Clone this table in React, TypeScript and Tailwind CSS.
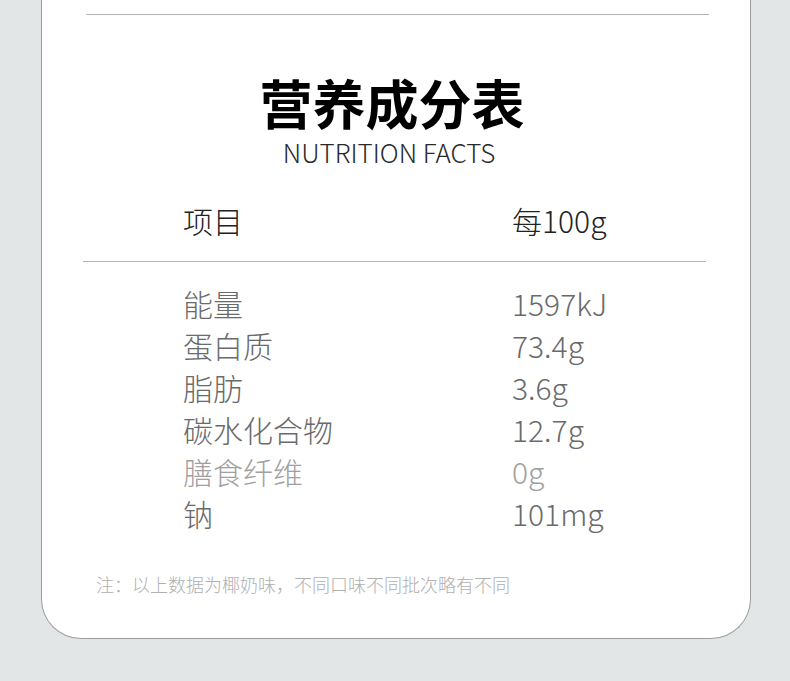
import React from "react";

const rows: { name: string; value: string; light?: boolean }[] = [
  { name: "能量", value: "1597kJ" },
  { name: "蛋白质", value: "73.4g" },
  { name: "脂肪", value: "3.6g" },
  { name: "碳水化合物", value: "12.7g" },
  { name: "膳食纤维", value: "0g", light: true },
  { name: "钠", value: "101mg" },
];

const cjk = { fontFamily: '"Noto Sans CJK SC", "Noto Sans", sans-serif' };

export default function App() {
  return (
    <div className="w-[790px] h-[681px] bg-[#e3e6e6] overflow-hidden" style={cjk}>
      <div className="ml-[41px] w-[710px] h-[639px] bg-white border border-t-0 border-[#9c9c9c] rounded-b-[40px] flex flex-col">
        <div className="mt-[14px] ml-[44px] w-[623px] h-px bg-[#b4b4b4]" />
        <div className="mt-[54px] flex flex-col items-center pr-[8px]">
          <div className="text-[53px] leading-[66px] font-bold text-black">营养成分表</div>
          <div className="text-[26px] leading-[34px] font-light text-[#2a2a2a] pr-[6px]">NUTRITION FACTS</div>
        </div>
        <div className="mt-[29px] flex items-center h-[44px] text-[30px] text-[#222] font-light">
          <div className="ml-[141px] w-[329px]">项目</div>
          <div>每100g</div>
        </div>
        <div className="mt-[19px] ml-[41px] w-[623px] h-px bg-[#b4b4b4]" />
        <div className="mt-[20px] flex flex-col">
          {rows.map((r) => (
            <div key={r.name} className={`flex items-center h-[42px] text-[30px] font-light ${r.light ? "text-[#a0a0a0]" : "text-[#6a6a6a]"}`}>
              <div className="ml-[141px] w-[329px]">{r.name}</div>
              <div>{r.value}</div>
            </div>
          ))}
        </div>
        <div className="mt-[38px] ml-[54px] text-[18px] leading-[24px] text-[#b0b0b0] font-light">
          注：以上数据为椰奶味，不同口味不同批次略有不同
        </div>
      </div>
    </div>
  );
}
